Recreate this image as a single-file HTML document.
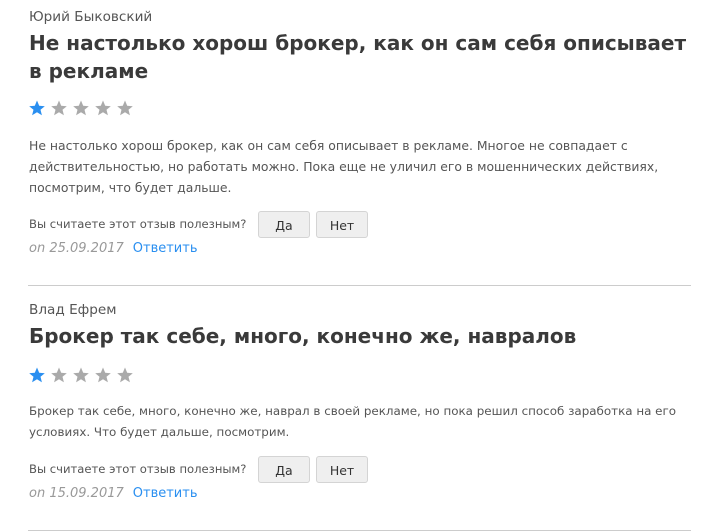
<!DOCTYPE html>
<html><head><meta charset="utf-8"><style>
body{margin:0;background:#fff;width:721px;height:531px;overflow:hidden;font-family:"DejaVu Sans","Liberation Sans",sans-serif;color:#444;position:relative}
.a{position:absolute;left:29px;white-space:nowrap}
.au{font-size:13.6px;color:#555}
.t{font-size:20px;font-weight:bold;color:#3a3a3a;line-height:28px}
.b{font-size:12.4px;color:#555;line-height:21px}
.q{font-size:11.6px;color:#555}
.btn{position:absolute;height:27px;border:1px solid #d4d4d4;border-radius:3px;background:#efefef;font-size:12.5px;color:#333;text-align:center;line-height:27px;box-sizing:border-box}
.d{font-size:13px;color:#999;font-style:italic}
.d span{color:#2a8ff0;font-style:normal;margin-left:9px}
.hr{position:absolute;left:28px;width:663px;height:1px;background:#ccc}
.s{position:absolute;left:29px}
</style></head><body>
<div class="a au" style="top:9px">Юрий Быковский</div>
<div class="a t" style="top:29px">Не настолько хорош брокер, как он сам себя описывает<br>в рекламе</div>
<svg class="s" style="top:100px" width="110" height="17"><path fill="#2a8ff0" d="M8 0.5l2.2 5.3 5.6.4-4.3 3.6 1.4 5.5L8 12.3 3.1 15.3l1.4-5.5L.2 6.2l5.6-.4z"/><path fill="#aaa" transform="translate(22 0)" d="M8 0.5l2.2 5.3 5.6.4-4.3 3.6 1.4 5.5L8 12.3 3.1 15.3l1.4-5.5L.2 6.2l5.6-.4z"/><path fill="#aaa" transform="translate(44 0)" d="M8 0.5l2.2 5.3 5.6.4-4.3 3.6 1.4 5.5L8 12.3 3.1 15.3l1.4-5.5L.2 6.2l5.6-.4z"/><path fill="#aaa" transform="translate(66 0)" d="M8 0.5l2.2 5.3 5.6.4-4.3 3.6 1.4 5.5L8 12.3 3.1 15.3l1.4-5.5L.2 6.2l5.6-.4z"/><path fill="#aaa" transform="translate(88 0)" d="M8 0.5l2.2 5.3 5.6.4-4.3 3.6 1.4 5.5L8 12.3 3.1 15.3l1.4-5.5L.2 6.2l5.6-.4z"/></svg>
<div class="a b" style="top:135px">Не настолько хорош брокер, как он сам себя описывает в рекламе. Многое не совпадает с<br>действительностью, но работать можно. Пока еще не уличил его в мошеннических действиях,<br>посмотрим, что будет дальше.</div>
<div class="a q" style="top:217px">Вы считаете этот отзыв полезным?</div>
<div class="btn" style="left:258px;top:211px;width:52px">Да</div>
<div class="btn" style="left:316px;top:211px;width:52px">Нет</div>
<div class="a d" style="top:241px">on 25.09.2017<span>Ответить</span></div>
<div class="hr" style="top:285px"></div>

<div class="a au" style="top:302px">Влад Ефрем</div>
<div class="a t" style="top:322px">Брокер так себе, много, конечно же, навралов</div>
<svg class="s" style="top:367px" width="110" height="17"><path fill="#2a8ff0" d="M8 0.5l2.2 5.3 5.6.4-4.3 3.6 1.4 5.5L8 12.3 3.1 15.3l1.4-5.5L.2 6.2l5.6-.4z"/><path fill="#aaa" transform="translate(22 0)" d="M8 0.5l2.2 5.3 5.6.4-4.3 3.6 1.4 5.5L8 12.3 3.1 15.3l1.4-5.5L.2 6.2l5.6-.4z"/><path fill="#aaa" transform="translate(44 0)" d="M8 0.5l2.2 5.3 5.6.4-4.3 3.6 1.4 5.5L8 12.3 3.1 15.3l1.4-5.5L.2 6.2l5.6-.4z"/><path fill="#aaa" transform="translate(66 0)" d="M8 0.5l2.2 5.3 5.6.4-4.3 3.6 1.4 5.5L8 12.3 3.1 15.3l1.4-5.5L.2 6.2l5.6-.4z"/><path fill="#aaa" transform="translate(88 0)" d="M8 0.5l2.2 5.3 5.6.4-4.3 3.6 1.4 5.5L8 12.3 3.1 15.3l1.4-5.5L.2 6.2l5.6-.4z"/></svg>
<div class="a b" style="top:401px;font-size:11.9px">Брокер так себе, много, конечно же, наврал в своей рекламе, но пока решил способ заработка на его<br>условиях. Что будет дальше, посмотрим.</div>
<div class="a q" style="top:462px">Вы считаете этот отзыв полезным?</div>
<div class="btn" style="left:258px;top:456px;width:52px">Да</div>
<div class="btn" style="left:316px;top:456px;width:52px">Нет</div>
<div class="a d" style="top:486px">on 15.09.2017<span>Ответить</span></div>
<div class="hr" style="top:530px"></div>
</body></html>
